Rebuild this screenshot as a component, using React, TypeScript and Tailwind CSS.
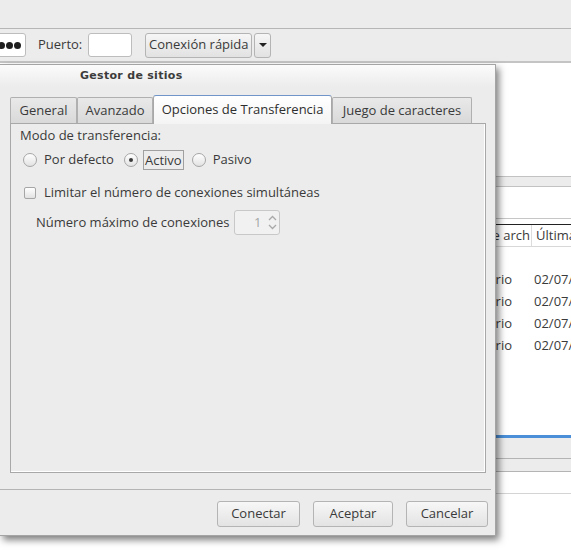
import React from 'react';

const font = { fontFamily: '"Open Sans", "Noto Sans", sans-serif' };

function Radio({ checked }: { checked?: boolean }) {
  return (
    <div className="w-[14px] h-[14px] rounded-full border border-[#a6a6a6] bg-gradient-to-b from-white to-[#e2e2e2] flex items-center justify-center shrink-0">
      {checked && <div className="w-[4px] h-[4px] rounded-full bg-[#3a3a3a]" />}
    </div>
  );
}

function Btn({ label, w }: { label: string; w: string }) {
  return (
    <div className={`${w} h-[26px] rounded-[3px] border border-[#b4b4b4] bg-gradient-to-b from-[#f7f7f7] to-[#e3e3e3] flex items-center justify-center text-[13px] text-[#3a3a3a]`}>
      {label}
    </div>
  );
}

function Tab({ label, active, w }: { label: string; active?: boolean; w: string }) {
  if (active) {
    return (
      <div className={`${w} h-[29px] -mb-px z-10 rounded-t-[3px] border border-b-0 border-[#a8a8a8] border-t-[#6f95c9] bg-gradient-to-b from-white to-[#f4f4f4] flex items-center justify-center text-[13px] text-[#2e2e2e]`}>
        {label}
      </div>
    );
  }
  return (
    <div className={`${w} h-[26px] border border-b-0 border-[#b0b0b0] rounded-t-[2px] bg-gradient-to-b from-[#e9e9e9] to-[#d9d9d9] flex items-center justify-center text-[13px] text-[#3a3a3a]`}>
      {label}
    </div>
  );
}

export default function App() {
  return (
    <div className="relative w-[571px] h-[553px] overflow-hidden bg-white text-[#3a3a3a]" style={font}>
      {/* main window */}
      <div className="h-[29px] bg-[#ececec] border-b border-[#b6b6b6]" />
      <div className="h-[34px] bg-[#ececec] border-b-2 border-[#c4c4c4] flex items-center text-[13px]">
        <div className="-ml-[10px] w-[36px] h-[24px] bg-white border border-[#bdbdbd] rounded-[3px] flex items-center gap-[1px] pl-[7px]">
          <div className="w-[7px] h-[7px] rounded-full bg-[#1e1e1e]" />
          <div className="w-[7px] h-[7px] rounded-full bg-[#1e1e1e]" />
          <div className="w-[7px] h-[7px] rounded-full bg-[#1e1e1e]" />
        </div>
        <span className="ml-[12px]">Puerto:</span>
        <div className="ml-[6px] w-[44px] h-[24px] bg-white border border-[#bdbdbd] rounded-[3px]" />
        <div className="ml-[13px] w-[107px] h-[25px] rounded-[3px] border border-[#b4b4b4] bg-gradient-to-b from-[#f6f6f6] to-[#e2e2e2] flex items-center justify-center">
          Conexión rápida
        </div>
        <div className="ml-[2px] w-[17px] h-[25px] rounded-[3px] border border-[#b4b4b4] bg-gradient-to-b from-[#f6f6f6] to-[#e2e2e2] flex items-center justify-center">
          <div className="w-0 h-0 border-l-[4px] border-r-[4px] border-t-[4px] border-l-transparent border-r-transparent border-t-[#222]" />
        </div>
      </div>
      <div className="h-[113px] bg-white" />
      <div className="h-[11px] bg-[#ececec] border-y border-[#c2c2c2]" />
      <div className="h-[31px] bg-white" />
      <div className="border-t border-[#c6c6c6] h-[6px] bg-white" />
      <div className="border-t border-[#222] h-[23px] bg-white flex text-[13px] border-b border-b-[#d8d8d8]">
        <div className="w-[531px] shrink-0 flex justify-end items-center overflow-hidden whitespace-nowrap pr-[1px]">Tipo de arch</div>
        <div className="shrink-0 border-l border-[#dcdcdc] pl-[4px] flex items-center whitespace-nowrap">Última modificación</div>
      </div>
      <div className="h-[188px] bg-white text-[13px] pt-[22px] overflow-hidden">
        {[0, 1, 2, 3].map((i) => (
          <div key={i} className="h-[22px] flex items-center whitespace-nowrap">
            <div className="w-[512px] shrink-0 flex justify-end overflow-hidden">Directorio</div>
            <div className="shrink-0 pl-[22px]">02/07/2015</div>
          </div>
        ))}
      </div>
      <div className="h-[3px] bg-[#4a8fd8]" />
      <div className="h-[21px] bg-[#ececec] border-b border-[#b4b4b4]" />
      <div className="h-[13px] bg-[#ececec] border-b border-[#b4b4b4]" />
      <div className="h-[22px] bg-white border-b border-[#d4d4d4]" />

      {/* Gestor de sitios dialog */}
      <div className="absolute left-0 top-[64px] w-[496px] h-[472px] bg-[#ececec] border border-l-0 border-[#a4a4a4] shadow-[3px_4px_7px_rgba(0,0,0,0.5)] flex flex-col">
        <div className="h-[22px] bg-gradient-to-b from-[#fbfbfb] to-[#ececec] flex items-center pl-[80px]">
          <span className="text-[11px] font-bold text-[#3c3c3c] tracking-[0.3px]" style={{ fontFamily: '"DejaVu Sans", sans-serif' }}>
            Gestor de sitios
          </span>
        </div>
        <div className="mt-[7px] ml-[10px] h-[29px] flex items-end">
          <Tab label="General" w="w-[67px]" />
          <Tab label="Avanzado" w="w-[76px]" />
          <Tab label="Opciones de Transferencia" active w="w-[179px]" />
          <Tab label="Juego de caracteres" w="w-[140px]" />
        </div>
        <div className="ml-[10px] w-[476px] h-[350px] border border-[#a8a8a8]">
          <div className="h-full border-r border-b border-white pl-[9px] pt-[3px] text-[13px] flex flex-col">
            <div className="h-[18px] flex items-center">Modo de transferencia:</div>
            <div className="mt-[4px] h-[22px] flex items-center pl-[3px]">
              <Radio />
              <span className="ml-[7px]">Por defecto</span>
              <div className="ml-[10px]">
                <Radio checked />
              </div>
              <span className="ml-[5px] px-[1px] border border-[#a0a0a0] leading-[18px]">Activo</span>
              <div className="ml-[8px]">
                <Radio />
              </div>
              <span className="ml-[7px]">Pasivo</span>
            </div>
            <div className="mt-[11px] h-[22px] flex items-center pl-[4px]">
              <div className="w-[12px] h-[12px] rounded-[2px] border border-[#a6a6a6] bg-gradient-to-b from-white to-[#e2e2e2]" />
              <span className="ml-[8px]">Limitar el número de conexiones simultáneas</span>
            </div>
            <div className="mt-[6px] h-[25px] flex items-center pl-[16px]">
              <span>Número máximo de conexiones</span>
              <div className="ml-[4px] w-[46px] h-[25px] rounded-[3px] border border-[#c8c8c8] bg-[#f1f1f1] flex">
                <div className="flex-1 flex items-center justify-end pr-[4px] text-[#a6a6a6]">1</div>
                <div className="w-[13px] flex flex-col items-center justify-center text-[#a9a9a9]">
                  <svg width="9" height="6" viewBox="0 0 9 6"><path d="M1 5 L4.5 1.5 L8 5" fill="none" stroke="#a9a9a9" strokeWidth="1.3" /></svg>
                  <svg width="9" height="6" viewBox="0 0 9 6" className="mt-[3px]"><path d="M1 1 L4.5 4.5 L8 1" fill="none" stroke="#a9a9a9" strokeWidth="1.3" /></svg>
                </div>
              </div>
            </div>
          </div>
        </div>
        <div className="mt-[16px] w-[491px] border-t border-[#b4b4b4]" />
        <div className="mt-[11px] flex justify-end gap-[13px] pr-[7px]">
          <Btn label="Conectar" w="w-[83px]" />
          <Btn label="Aceptar" w="w-[80px]" />
          <Btn label="Cancelar" w="w-[82px]" />
        </div>
      </div>
    </div>
  );
}
